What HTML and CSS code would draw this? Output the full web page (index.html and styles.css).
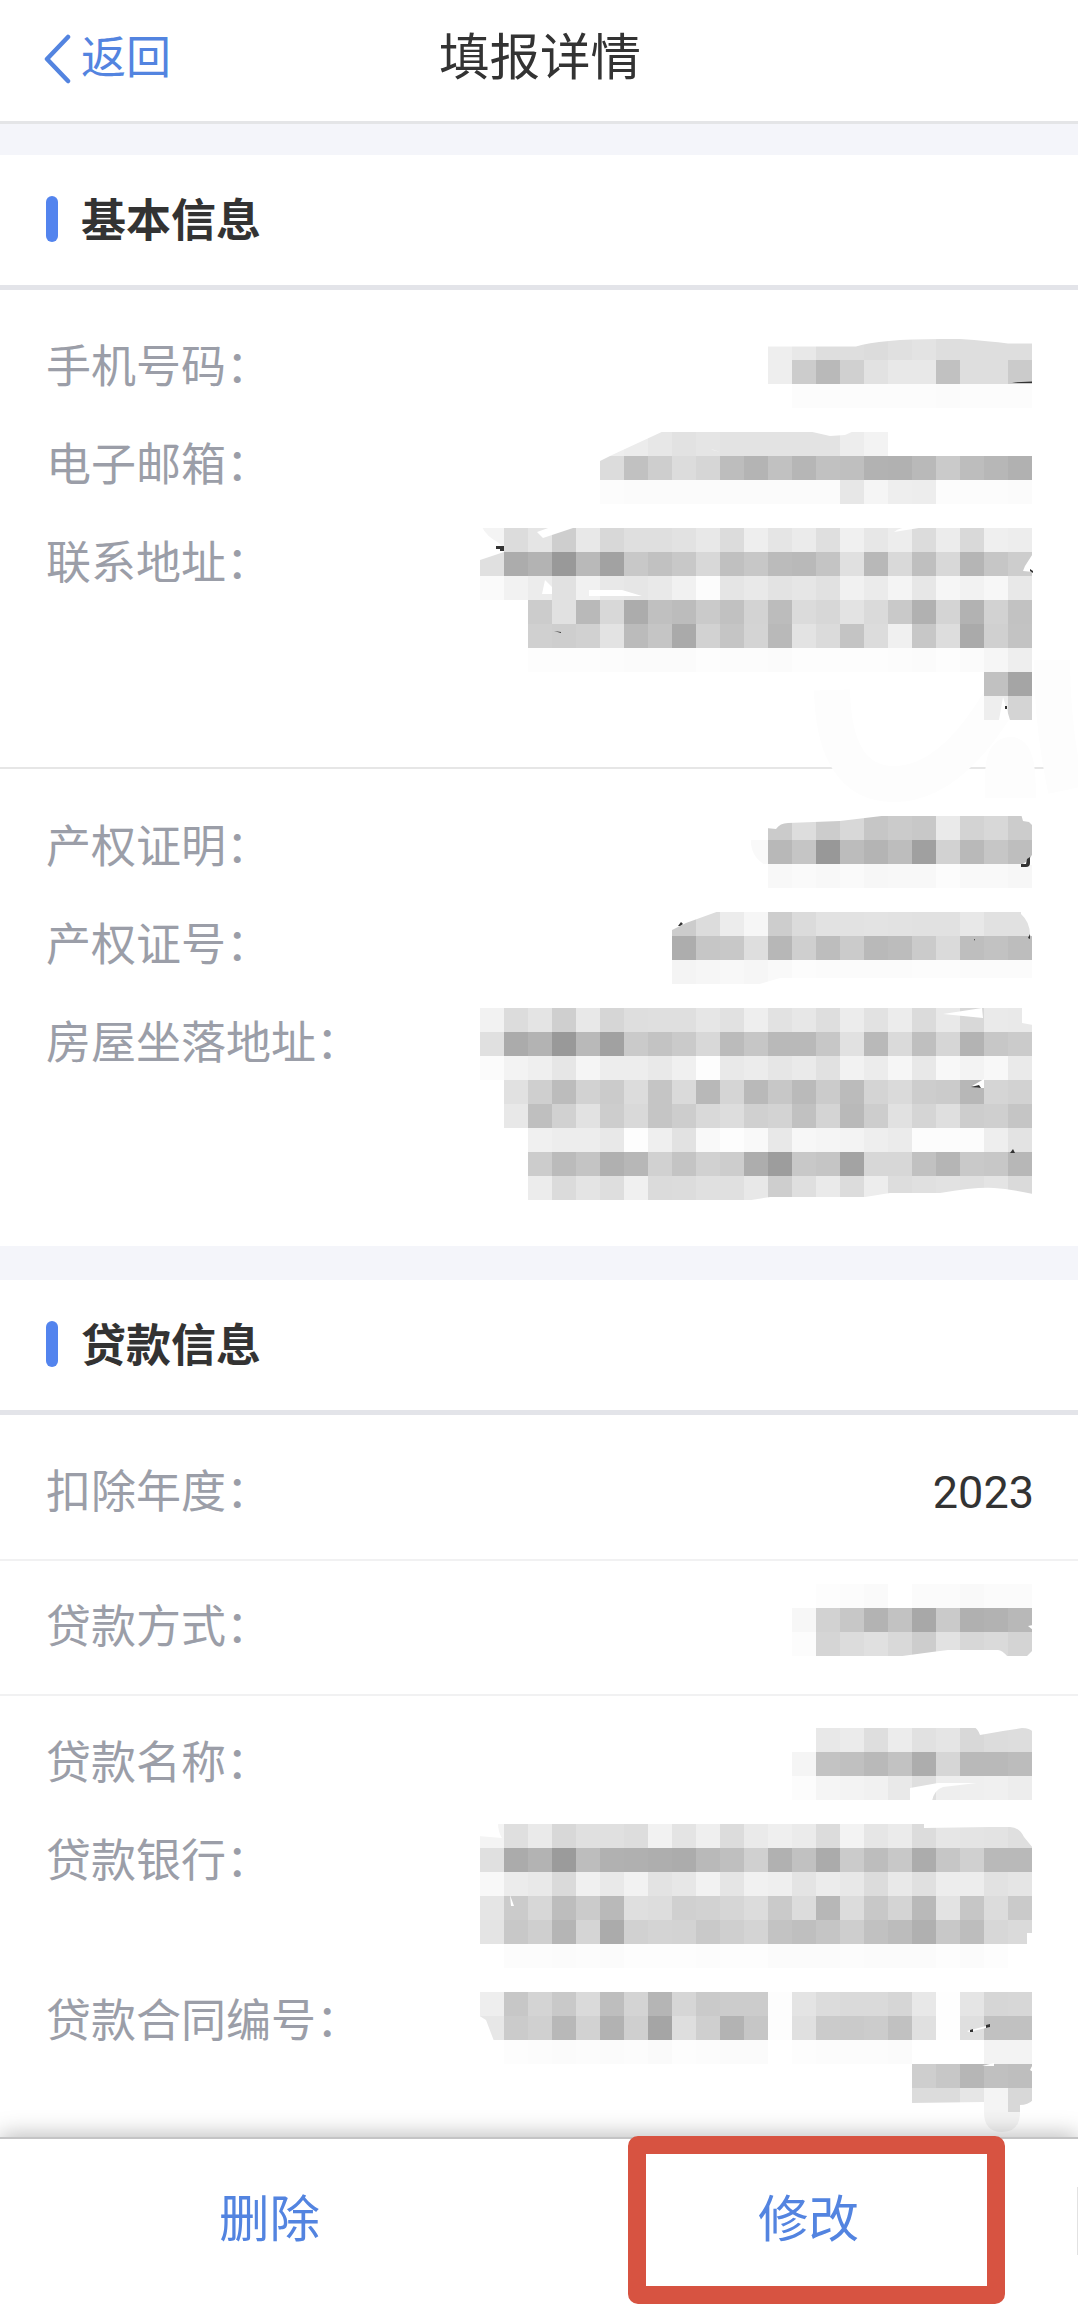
FILE: index.html
```html
<!DOCTYPE html>
<html lang="zh-CN">
<head>
    <meta charset="UTF-8">
    <meta name="viewport" content="width=device-width, initial-scale=1.0">
    <title>填报详情</title>
    <link rel="stylesheet" href="styles.css">
</head>
<body>
    <header class="header">
        <a class="back">
            <svg class="back-icon" width="28" height="62" viewBox="0 0 28 62"><path d="M25 10L4 32L25 54"/></svg>
            <span>返回</span>
        </a>
        <h1>填报详情</h1>
    </header>

    <section class="card">
        <h2>基本信息</h2>
        <div class="group contact">
            <div class="row">
                <span class="label">手机号码：</span>
                <svg class="mask" id="phone" width="646" height="98" viewBox="432 317 646 98">
                    <g></g>
                    <path class="cut" d="M764 330V346.500H856Q880 339 940 339H960Q990 341 1008 343.500H1034V330Z"/>
                    <path class="ink" d="M1012 382.500L1032 381.500V383H1016Z"/>
                </svg>
            </div>
            <div class="row">
                <span class="label">电子邮箱：</span>
                <svg class="mask" id="email" width="646" height="98" viewBox="432 415 646 98">
                    <g></g>
                    <path class="cut" d="M598 430H666L612 455L600 461L598 462ZM808 431L830 436L845 435L854 431Z"/>
                    <path class="cut" d="M711 449L720 452L713 450Z"/>
                </svg>
            </div>
            <div class="row">
                <span class="label">联系地址：</span>
                <svg class="mask" id="address" width="646" height="254" viewBox="432 513 646 254">
                    <path class="smear" d="M832 690Q834 784 894 784Q950 784 1000 700M1052 660Q1052 725 1066 790M1003 798V780Q1003 755 1010 755Q1018 755 1018 798"/>
                    <g></g>
                    <path class="cut" d="M478 527H482Q486 536 499 543L504 548V552L480 560L478 560ZM537 532L551 527H576L543 538ZM894 532L925 527H912Q900 527 894 532ZM1034 552L1025 566L1023 571L1034 572ZM545 580L552 587V594H542ZM589 590H622L642 596H589ZM1003 697L999 720H1010Z"/>
                    <path class="ink" d="M496 546H504V551H500V549H496ZM1030 569L1033 571V573L1030 571ZM554 631L561 632L561 633ZM1005 706H1007V709H1005Z"/>
                </svg>
            </div>
        </div>
        <div class="group property">
            <div class="row">
                <span class="label">产权证明：</span>
                <svg class="mask" id="certType" width="646" height="98" viewBox="432 798 646 98">
                    <g></g>
                    <path class="cut" d="M766 812V828L776 829Q780 823 788 823L840 821L890 815V812ZM1021 814L1023 821L1029 822L1033 826V814ZM1033 853L1029 860L1021 865H1033ZM743 839H751Q750 856 765 865H743Z"/>
                    <path class="ink" d="M1027 859L1030 857V863Q1030 867 1026 867H1021V864H1026Z"/>
                </svg>
            </div>
            <div class="row">
                <span class="label">产权证号：</span>
                <svg class="mask" id="certNo" width="646" height="98" viewBox="432 896 646 98">
                    <g></g>
                    <path class="cut" d="M670 910H722L686 923L672 930H670ZM1021 911V914Q1030 922 1030 935L1033 937V911ZM756 985L780 978H1033V985Z"/>
                    <path class="ink" d="M678 926L681 922L683 924L680 926ZM1028 938L1030 934V939ZM974 939H975V941Z"/>
                </svg>
            </div>
            <div class="row">
                <span class="label">房屋坐落地址：</span>
                <svg class="mask" id="house" width="646" height="252" viewBox="432 994 646 252">
                    <g></g>
                    <path class="cut" d="M943 1014L982 1008L983 1018ZM1022 1007V1023L1033 1025V1007ZM972 1086L984 1079V1088L978 1088ZM745 1201L770 1197H865L890 1193H940Q975 1187 994 1188Q1010 1189 1033 1194V1201Z"/>
                    <path class="ink" d="M971 1087L979 1085L981 1088ZM1010 1153L1013 1149L1015 1153Z"/>
                </svg>
            </div>
        </div>
    </section>

    <section class="card">
        <h2>贷款信息</h2>
        <div class="row line">
            <span class="label">扣除年度：</span>
            <span class="value">2023</span>
        </div>
        <div class="row line">
            <span class="label">贷款方式：</span>
            <svg class="mask" id="loanType" width="646" height="133" viewBox="432 1561 646 133">
                <g></g>
                <path class="cut" d="M895 1657L932 1652L948 1650H998Q1002 1650 1008 1657ZM1028 1626L1033 1630V1625ZM1033 1650L1026 1657H1033Z"/>
            </svg>
        </div>
        <div class="group loan">
            <div class="row">
                <span class="label">贷款名称：</span>
                <svg class="mask" id="loanName" width="646" height="98" viewBox="432 1713 646 98">
                    <g></g>
                    <path class="cut" d="M974 1727Q978 1729 980 1735L1003 1731L1022 1728Q1030 1728 1033 1732V1727ZM910 1788L938 1783H977L943 1787Q934 1790 932 1801H910Z"/>
                </svg>
            </div>
            <div class="row">
                <span class="label">贷款银行：</span>
                <svg class="mask" id="bank" width="646" height="160" viewBox="432 1811 646 160">
                    <g></g>
                    <path class="cut" d="M478 1823H498Q498 1832 502 1838L478 1836ZM924 1823V1828L990 1827H1010Q1019 1827 1024 1837L1033 1848V1823ZM510 1895L514 1906H511ZM1027 1933H1033V1945H1027Z"/>
                </svg>
            </div>
            <div class="row">
                <span class="label">贷款合同编号：</span>
                <svg class="mask" id="contract" width="646" height="166" viewBox="432 1971 646 166">
                    <g></g>
                    <path class="cut" d="M478 2015L486 2020L494 2041H478ZM967 2031L990 2025V2027L969 2032ZM982 2066L994 2063V2066ZM1030 2070L1033 2064V2072ZM910 2103L984 2102V2113H910ZM1020 2105Q1028 2105 1033 2100V2113H1020Z"/>
                    <path class="tail" d="M984 2112H1020Q1020 2132 1002 2132Q984 2132 984 2112Z"/>
                    <path class="ink" d="M970 2030L973 2029L973 2032L970 2032ZM986 2025L990 2024V2027L986 2028Z"/>
                </svg>
            </div>
        </div>
    </section>

    <footer class="footer">
        <button>删除</button>
        <button class="edit">修改</button>
    </footer>

    <script>
        // each mosaic starts at x / y, every pair is the grey level of one 24px block
        const CELL = 24;
        const masks = {
            phone: { x: 768, y: 336, rows: [
                "ee e8 de de dc e0 e3 de de de de",
                "ee cc b9 d0 e2 e8 e8 c1 de de cb",
                ".. fc fc fc fc fc fc fb fc fc fc"
            ] },
            email: { x: 600, y: 432, rows: [
                "ee ec e7 e2 e5 e3 e3 e3 e3 e3 ed f3",
                "dc c1 ce dc d6 bd b4 c1 b6 c1 bf b2 b1 b9 ca bd b7 b1",
                "fc fb fb fb fb fb fb fb fb fb e7 f5 ee ed fc fc fc fb"
            ] },
            address: { x: 480, y: 528, rows: [
                "f4 dc e5 ce e8 d8 df df e2 e8 dc ee e5 eb df f0 e7 ed dc ec d9 ef ed",
                "e0 ac b3 99 b9 a2 c8 c1 c8 d8 c0 c7 bb b9 c4 e0 b8 d9 bf d8 b5 c6 cd",
                "fa f2 ec e1 f1 e8 e6 e9 f1 fc e5 e9 e3 e6 e1 f1 eb f4 e7 f6 f2 f7 e8",
                ".. .. cc e1 b9 d8 ac c0 bc ca c1 d3 bc db d7 e3 da c9 b1 d4 b2 d2 c2",
                ".. .. d0 ce d1 e3 bb c5 aa d2 c5 d4 b9 e3 db c4 dc f0 c7 dd aa d0 c3",
                ".. .. fd fd fd fc fb fb fb fd fc fc fb fd fd fd fd fc fb fd fb f6 ee",
                ".. .. .. .. .. .. .. .. .. .. .. .. .. .. .. .. .. .. .. .. .. c1 a5",
                ".. .. .. .. .. .. .. .. .. .. .. .. .. .. .. .. .. .. .. .. .. ee d4"
            ] },
            certType: { x: 744, y: 816, rows: [
                ".. cb dd cc d8 c6 cb c8 ea d3 d8 cc",
                "f9 b8 c5 98 bc b4 bd a0 d2 b9 c6 be",
                ".. f8 fa f8 fa f7 f8 f8 fc f9 f9 f7"
            ] },
            certNo: { x: 672, y: 912, rows: [
                "cc dc ec f6 cd db e2 e2 e3 e2 e1 e1 e8 e1 e1",
                "ad c6 c8 de b7 cf bd cb b9 bc cb da be c2 bd",
                "f4 f6 f8 f6 f9 fc fb fb fb fb fc fc fb fb fb"
            ] },
            house: { x: 480, y: 1008, rows: [
                "f2 dc e4 cf e8 d6 de df df e6 e1 ee e2 e7 de ec e2 ec db e9 d8 ea e9",
                "e0 ab b3 99 b9 a1 ca c3 ca d8 bb c6 b9 b9 c7 e1 b9 da bf d6 b3 c7 cb",
                "fb f3 ef e6 f5 ed ed e9 f0 fd e9 ec e6 ea e1 f2 ec f6 e8 f8 f3 f8 ea",
                ".. e1 cf bc d2 cb dc c5 da b8 d5 b9 c7 ba cb bb d4 da cd cb b7 d5 d2",
                ".. e8 bf d1 e2 cd d9 c5 cd d9 dd d0 d3 c1 d4 b9 cd e1 d5 df cd cf c5",
                ".. .. f0 ed ed e8 fd ef e2 f9 fd f9 e8 f7 f5 f3 ee eb fc fc fc ee e3",
                ".. .. cc bb c4 b0 b7 d1 c4 d1 cd ad 9d c8 c5 a3 d7 d7 c1 b5 c9 c7 b7",
                ".. .. ec db e4 de f0 db dc e0 e0 e8 ce df ea dc ed dd e0 e2 e0 e4 da"
            ] },
            loanType: { x: 792, y: 1584, rows: [
                ".. fd fc fa .. fb fb f9 fb fb",
                "f7 d2 c7 b3 c2 a8 ca b0 b2 b8",
                "fc d5 dc e0 d9 cd e2 d7 da d4"
            ] },
            loanName: { x: 792, y: 1728, rows: [
                ".. e8 eb de ec e1 e5 d8 dc dd",
                "f5 c3 c0 b9 c2 ad d6 b9 b9 bc",
                "fc f5 f3 f1 e9 df ee ef f0 ed"
            ] },
            bank: { x: 480, y: 1824, rows: [
                "f4 df ea d8 e0 e0 dd f2 e4 ef dc ea ef eb dc f3 e6 eb dc e6 e4 e3 df",
                "e0 ab b3 9b bd b1 b0 ae ac b9 bf d0 b1 c1 ab cb bd c8 ac c6 d0 b9 b9",
                "f8 ec e9 da f0 e9 f2 e3 e7 f2 e5 f1 ef e4 ec e8 dc e9 e0 ed ed e2 e5",
                "e5 cb d7 bd cb b9 df dd d0 d2 d6 dc ca dc b7 dc c8 d4 b9 e3 c6 dc ca",
                "e4 c8 cf b5 d5 ab d1 d4 d3 c9 cf d4 c3 bf c5 ce c1 bc b0 c8 bd d7 da",
                ".. fc fc fb fc fb fd fd fd fc fd fd fb fb fb fc fb fb fb fd fb fd .."
            ] },
            contract: { x: 480, y: 1992, rows: [
                "ee c7 d4 c9 da be d4 b5 d6 ca cc cc fd e4 dc da da d6 e8 fe e5 d6 d7",
                "e7 cb d0 b8 d2 b2 cf a5 de cf b3 c6 fd e0 cb ca cc c1 e0 fe df c1 c1",
                ".. fd fc fb fc fb fc fa fd fc fb fb .. fd fc fc fc fb .. .. .. f3 f3",
                ".. .. .. .. .. .. .. .. .. .. .. .. .. .. .. .. .. .. ce c7 b6 c0 be",
                ".. .. .. .. .. .. .. .. .. .. .. .. .. .. .. .. .. .. dc dc e6 f4 d8"
            ] }
        };

        for (const id in masks) {
            const { x, y, rows } = masks[id];
            let html = "";
            rows.forEach((row, r) => {
                row.split(" ").forEach((g, c) => {
                    if (g === "..") return;
                    html += `<rect x="${x + c * CELL}" y="${y + r * CELL}" width="${CELL}" height="${CELL}" fill="#${g}${g}${g}"/>`;
                });
            });
            document.querySelector("#" + id + " g").innerHTML = html;
        }
    </script>
</body>
</html>
```

FILE: styles.css
```css
*, *::before, *::after { box-sizing: border-box; }
body { margin: 0; height: 2310px; display: flex; flex-direction: column; background: #f4f5fa; color: #333; font-family: Roboto, "Noto Sans CJK SC", sans-serif; font-size: 45px; overflow: hidden; }

.header { height: 124px; flex: none; display: grid; grid-template-columns: 1fr auto 1fr; align-items: center; padding: 2px 41px 9px 43px; background: #fff; border-bottom: 3px solid #e4e5e7; }
.header h1 { margin: 0; font-size: 50.5px; font-weight: 400; line-height: 110px; }
.back { display: flex; align-items: center; gap: 10px; color: #5384e0; line-height: 110px; }
.back span { padding-top: 2px; }
.back-icon { fill: none; stroke: #5384e0; stroke-width: 4.500; stroke-linecap: round; stroke-linejoin: round; }

.card { flex: none; background: #fff; margin-top: 31px; }
.card + .card { margin-top: 34px; flex: 1; }
.card h2 { display: flex; align-items: center; gap: 23px; height: 135px; margin: 0; padding-left: 46px; font-size: 45px; font-weight: 700; line-height: 130px; padding-top: 3px; border-bottom: 5px solid #e3e4e9; }
.card h2::before { content: ""; width: 12px; height: 46px; margin-top: -5px; border-radius: 6px; background: #5384ee; }

.group { padding-left: 46px; }
.contact { padding-top: 27px; border-bottom: 2px solid #e6e6e6; height: 479px; }
.property { padding-top: 29px; height: 477px; }
.loan { padding-top: 17px; }
.row { display: flex; justify-content: space-between; align-items: flex-start; }
.label { line-height: 102px; color: #9b9ea8; white-space: nowrap; margin-bottom: -4px; }
.property .label { line-height: 100px; margin-bottom: -2px; }
.value { margin-right: 44px; }
.line { align-items: center; padding-left: 46px; height: 135px; border-bottom: 2px solid #f1f1f2; }
.line .label { margin-bottom: -1px; }
.card h2 + .line { height: 146px; padding-top: 10px; }

.mask { display: block; flex: none; margin-left: -200px; overflow: visible; }
.mask rect { shape-rendering: crispEdges; }
.cut { fill: #fff; }
.ink { fill: #333; }
.tail { fill: #f3f3f3; }
.smear { fill: none; stroke: #fdfdfd; stroke-width: 36; }

.footer { position: relative; flex: none; height: 173px; display: flex; background: #fff; border-top: 2px solid #c4c4c5; box-shadow: 0 -2px 22px rgba(0, 0, 0, 0.28); }
.footer::after { content: ""; position: absolute; right: 0; top: 48px; width: 1px; height: 68px; background: #e2e2e2; }
.footer button { flex: 1; padding: 0 0 19px; border: none; background: none; color: #5384e0; font-family: inherit; font-size: 50.5px; }
.edit { position: relative; }
.edit::before { content: ""; position: absolute; left: 89px; top: -3px; width: 377px; height: 168px; border: 18px solid #d75341; border-radius: 10px; }
```
